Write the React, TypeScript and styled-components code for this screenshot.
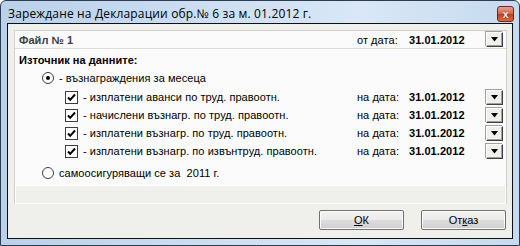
import React from 'react';
import styled, { createGlobalStyle } from 'styled-components';

const GlobalStyle = createGlobalStyle`
  html, body { margin: 0; padding: 0; background: #fff; }
  * { box-sizing: border-box; }
`;

const Window = styled.div`
  width: 520px;
  height: 246px;
  display: flex;
  flex-direction: column;
  border: 1px solid #2e3e50;
  border-radius: 6px 6px 0 0;
  background: linear-gradient(to right, #b9d1ea 0%, #cfe0f3 45%, #d9e7f6 70%, #c6daef 100%);
  font-family: Arial, 'Liberation Sans', sans-serif;
`;

const TitleBar = styled.div`
  height: 22px;
  display: flex;
  align-items: center;
  justify-content: space-between;
  padding: 0 5px 0 7px;
`;

const Title = styled.span`
  font-family: 'Open Sans', 'Noto Sans', sans-serif;
  font-size: 12px;
  letter-spacing: 0.15px;
  color: #000;
  margin-top: 2px;
`;

const CloseButton = styled.div`
  width: 17px;
  height: 16px;
  margin-top: 4px;
  border: 1px solid #6b2a1c;
  border-radius: 3px;
  background: linear-gradient(to bottom, #e8a08c 0%, #d5644a 48%, #c0401f 52%, #d86a48 100%);
  display: flex;
  align-items: center;
  justify-content: center;
  color: #fff;
  font-size: 11px;
  font-weight: bold;
  text-shadow: 0 0 1px #000;
`;

const Frame = styled.div`
  flex: 1;
  display: flex;
  padding: 0 6px 6px;
`;

const Client = styled.div`
  flex: 1;
  display: flex;
  flex-direction: column;
  border: 1px solid #101010;
  background: #eff0ec;
  padding: 6px 5px 0 6px;
`;

const Panel = styled.div`
  display: flex;
  flex-direction: column;
  border: 1px solid #d2d2cc;
  border-bottom: none;
  background: #fbfbfb;
`;

const HeaderRow = styled.div`
  height: 18px;
  display: flex;
  align-items: center;
  padding-left: 4px;
  border-bottom: 1px solid #dcdcd6;
`;

const Body = styled.div`
  display: flex;
  flex-direction: column;
  padding: 3px 0 0 4px;
`;

const FooterStrip = styled.div`
  height: 19px;
  border: 1px solid #fff;
  background: #eff0ec;
`;

const Text = styled.span<{ $bold?: boolean; $width?: number }>`
  font-size: 11px;
  color: #000;
  letter-spacing: 0.05px;
  font-weight: ${p => (p.$bold ? 'bold' : 'normal')};
  ${p => (p.$width ? `width: ${p.$width}px; flex: none;` : '')}
  white-space: pre;
`;

const HeaderText = styled(Text)`
  color: #3c3c44;
`;

const Row = styled.div<{ $indent: number; $height: number }>`
  height: ${p => p.$height}px;
  display: flex;
  align-items: center;
  padding-left: ${p => p.$indent}px;
`;

const Spacer = styled.div`
  flex: 1;
`;

const Radio = styled.div<{ $checked?: boolean }>`
  width: 12px;
  height: 12px;
  border-radius: 50%;
  border: 1px solid #3c3c3c;
  background: #fff;
  margin-right: 5px;
  display: flex;
  align-items: center;
  justify-content: center;
  &::after {
    content: '';
    width: 4px;
    height: 4px;
    border-radius: 50%;
    background: ${p => (p.$checked ? '#000' : 'transparent')};
  }
`;

const CheckBox = styled.div`
  width: 13px;
  height: 13px;
  border: 1px solid #3c3c3c;
  background: #fff;
  margin-right: 5px;
  display: flex;
  align-items: center;
  justify-content: center;
`;

const DropButton = styled.div`
  width: 17px;
  height: 15px;
  margin-right: 3px;
  background: #eff0ec;
  border-top: 1px solid #fff;
  border-left: 1px solid #fff;
  border-right: 1px solid #404040;
  border-bottom: 1px solid #404040;
  box-shadow: inset -1px -1px 0 #a0a0a0, -1px -1px 0 #a0a0a0;
  display: flex;
  align-items: center;
  justify-content: center;
`;

const ButtonBar = styled.div`
  flex: 1;
  display: flex;
  align-items: flex-start;
  justify-content: flex-end;
  gap: 17px;
  padding: 6px 1px 0 0;
`;

const Button = styled.button`
  width: 85px;
  height: 20px;
  border: 1px solid #707070;
  border-radius: 2px;
  background: linear-gradient(to bottom, #f2f2f2 0%, #ebebeb 49%, #dddddd 51%, #cfcfcf 100%);
  font-family: Arial, 'Liberation Sans', sans-serif;
  font-size: 11px;
  color: #000;
  padding: 0;
  box-shadow: inset 0 0 0 1px #fcfcfc;
`;

const Arrow = () => (
  <svg width="7" height="5" viewBox="0 0 7 5">
    <path d="M0 0h7L3.5 4.5z" fill="#000" />
  </svg>
);

const Tick = () => (
  <svg width="9" height="9" viewBox="0 0 9 9">
    <path d="M1 4.5l2.2 2.3L8 1.5" stroke="#000" strokeWidth="2" fill="none" />
  </svg>
);

const DateCell: React.FC<{ label: string }> = ({ label }) => (
  <>
    <Text $width={52}>{label}</Text>
    <Text $bold $width={77}>31.01.2012</Text>
    <DropButton><Arrow /></DropButton>
  </>
);

const SOURCES = [
  '- изплатени аванси по труд. правоотн.',
  '- начислени възнагр. по труд. правоотн.',
  '- изплатени възнагр. по труд. правоотн.',
  '- изплатени възнагр. по извънтруд. правоотн.',
];

export default function App() {
  return (
    <>
      <GlobalStyle />
      <Window>
        <TitleBar>
          <Title>Зареждане на Декларации обр.№ 6 за м. 01.2012 г.</Title>
          <CloseButton>x</CloseButton>
        </TitleBar>
        <Frame>
          <Client>
            <Panel>
              <HeaderRow>
                <HeaderText $bold>Файл № 1</HeaderText>
                <Spacer />
                <DateCell label="от дата:" />
              </HeaderRow>
              <Body>
                <Row $indent={0} $height={16}>
                  <Text $bold>Източник на данните:</Text>
                </Row>
                <Row $indent={23} $height={20}>
                  <Radio $checked />
                  <Text>- възнаграждения за месеца</Text>
                </Row>
                {SOURCES.map(s => (
                  <Row key={s} $indent={46} $height={18}>
                    <CheckBox><Tick /></CheckBox>
                    <Text>{s}</Text>
                    <Spacer />
                    <DateCell label="на дата:" />
                  </Row>
                ))}
                <Row $indent={23} $height={25}>
                  <Radio />
                  <Text>самоосигуряващи се за  2011 г.</Text>
                </Row>
              </Body>
              <FooterStrip />
            </Panel>
            <ButtonBar>
              <Button><u>О</u>К</Button>
              <Button>От<u>к</u>аз</Button>
            </ButtonBar>
          </Client>
        </Frame>
      </Window>
    </>
  );
}
